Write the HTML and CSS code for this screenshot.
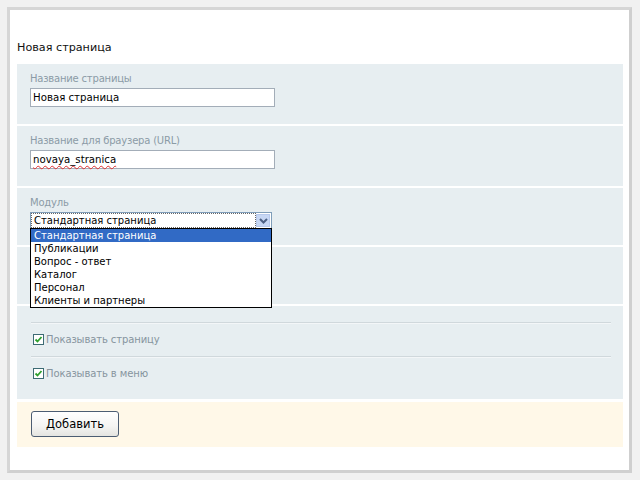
FILE: index.html
```html
<!DOCTYPE html>
<html lang="ru">
<head>
<meta charset="utf-8">
<title>Новая страница</title>
<link rel="stylesheet" href="styles.css">
</head>
<body>
<div class="panel">
  <h1 class="title">Новая страница</h1>

  <div class="section">
    <div class="label">Название страницы</div>
    <div class="input">Новая страница</div>
  </div>

  <div class="section">
    <div class="label">Название для браузера (URL)</div>
    <div class="input"><span class="spell">novaya_stranica</span></div>
  </div>

  <div class="section section-short">
    <div class="label">Модуль</div>
    <div class="select">
      <div class="select-value"><span class="focus">Стандартная страница</span></div>
      <div class="select-btn">
        <svg width="9" height="6" viewBox="0 0 9 6"><path d="M1 1 L4.5 4.5 L8 1" fill="none" stroke="#4d6185" stroke-width="2"/></svg>
      </div>
      <ul class="dropdown">
        <li class="active">Стандартная страница</li>
        <li>Публикации</li>
        <li>Вопрос - ответ</li>
        <li>Каталог</li>
        <li>Персонал</li>
        <li>Клиенты и партнеры</li>
      </ul>
    </div>
  </div>

  <div class="section section-short"></div>

  <div class="section section-checks">
    <div class="check-row">
      <span class="checkbox"><svg width="11" height="11" viewBox="0 0 11 11"><rect x="0.5" y="0.5" width="10" height="10" fill="#fff" stroke="#3d6b74"/><path d="M2.5 5.5 L4.5 7.5 L8.5 3" fill="none" stroke="#2ea02e" stroke-width="1.8"/></svg></span>
      <span class="check-label">Показывать страницу</span>
    </div>
    <div class="check-row">
      <span class="checkbox"><svg width="11" height="11" viewBox="0 0 11 11"><rect x="0.5" y="0.5" width="10" height="10" fill="#fff" stroke="#3d6b74"/><path d="M2.5 5.5 L4.5 7.5 L8.5 3" fill="none" stroke="#2ea02e" stroke-width="1.8"/></svg></span>
      <span class="check-label">Показывать в меню</span>
    </div>
  </div>

  <div class="actions">
    <button class="btn" type="button">Добавить</button>
  </div>
</div>
</body>
</html>
```

FILE: styles.css
```css
html, body {
  margin: 0;
  padding: 0;
}
body {
  background: #f1f1f1;
  padding: 7px 0 0 7px;
  font-family: "DejaVu Sans", Verdana, sans-serif;
  height: 473px;
  box-sizing: border-box;
}
.panel {
  width: 625px;
  height: 466px;
  box-sizing: border-box;
  background: #fff;
  border: 3px solid #d3d3d3;
  border-color: #d6d6d6 #cfcfcf #d0d0d0 #d6d6d6;
  padding: 0 6px 0 7px;
}
.title {
  margin: 0;
  padding-top: 30px;
  height: 16px;
  line-height: 16px;
  font-size: 11.2px;
  font-weight: normal;
  color: #111;
  margin-bottom: 8px;
}
.section {
  background: #e7eef1;
  height: 60px;
  box-sizing: border-box;
  padding: 8px 0 0 13px;
  margin-bottom: 2px;
}
.section-short {
  height: 57px;
}
.label {
  font-size: 10px;
  letter-spacing: -0.2px;
  line-height: 14px;
  color: #8b9ba6;
  margin-bottom: 2px;
}
.input {
  width: 245px;
  height: 19px;
  box-sizing: border-box;
  border: 1px solid #a3adb8;
  background: #fff;
  font-size: 10.2px;
  line-height: 17px;
  padding-left: 2px;
  color: #000;
}
.spell {
  text-decoration: underline wavy #e03030;
  text-decoration-thickness: 1px;
  text-underline-offset: 2px;
}
.select {
  position: relative;
  width: 242px;
  height: 17px;
  box-sizing: border-box;
  border: 1px solid #7f9db9;
  background: #fff;
  display: flex;
}
.select-value {
  flex: 1;
  padding: 1px 0 0 1px;
  font-size: 10px;
  line-height: 13px;
  color: #000;
}
.focus {
  display: block;
  outline: 1px dotted #666;
  outline-offset: 0;
  padding-left: 2px;
  margin-right: 1px;
}
.select-btn {
  width: 14px;
  height: 13px;
  margin: 1px 1px 0 0;
  background: #c7d7f4;
  border: 1px solid #b7c9ec;
  box-sizing: border-box;
  display: flex;
  align-items: center;
  justify-content: center;
}
.dropdown {
  position: absolute;
  left: -1px;
  top: 15px;
  width: 242px;
  box-sizing: border-box;
  margin: 0;
  padding: 0;
  list-style: none;
  background: #fff;
  border: 1px solid #000;
  z-index: 5;
}
.dropdown li {
  height: 13px;
  line-height: 13px;
  font-size: 10px;
  padding-left: 3px;
  color: #000;
}
.dropdown li.active {
  background: #316ac5;
  color: #fff;
}
.section-checks {
  height: 93px;
  padding: 16px 12px 0 14px;
  margin-bottom: 3px;
}
.check-row {
  border-top: 1px solid #d0d8dc;
  box-shadow: inset 0 1px 0 #f3f6f8;
  height: 34px;
  box-sizing: border-box;
  display: flex;
  align-items: center;
  padding-left: 2px;
}
.checkbox {
  display: flex;
  width: 11px;
  height: 11px;
  margin-right: 2px;
}
.check-label {
  font-size: 10px;
  letter-spacing: -0.1px;
  color: #86949e;
}
.actions {
  background: #fff8e8;
  height: 45px;
  box-sizing: border-box;
  padding: 9px 0 0 14px;
}
.btn {
  width: 88px;
  height: 26px;
  border: 1px solid #4c5d73;
  border-radius: 3px;
  background: linear-gradient(#ffffff, #f4f4f2 60%, #e4e4e0);
  font-family: "DejaVu Sans", Verdana, sans-serif;
  font-size: 11.5px;
  color: #000;
  padding: 0;
  cursor: pointer;
}
```
